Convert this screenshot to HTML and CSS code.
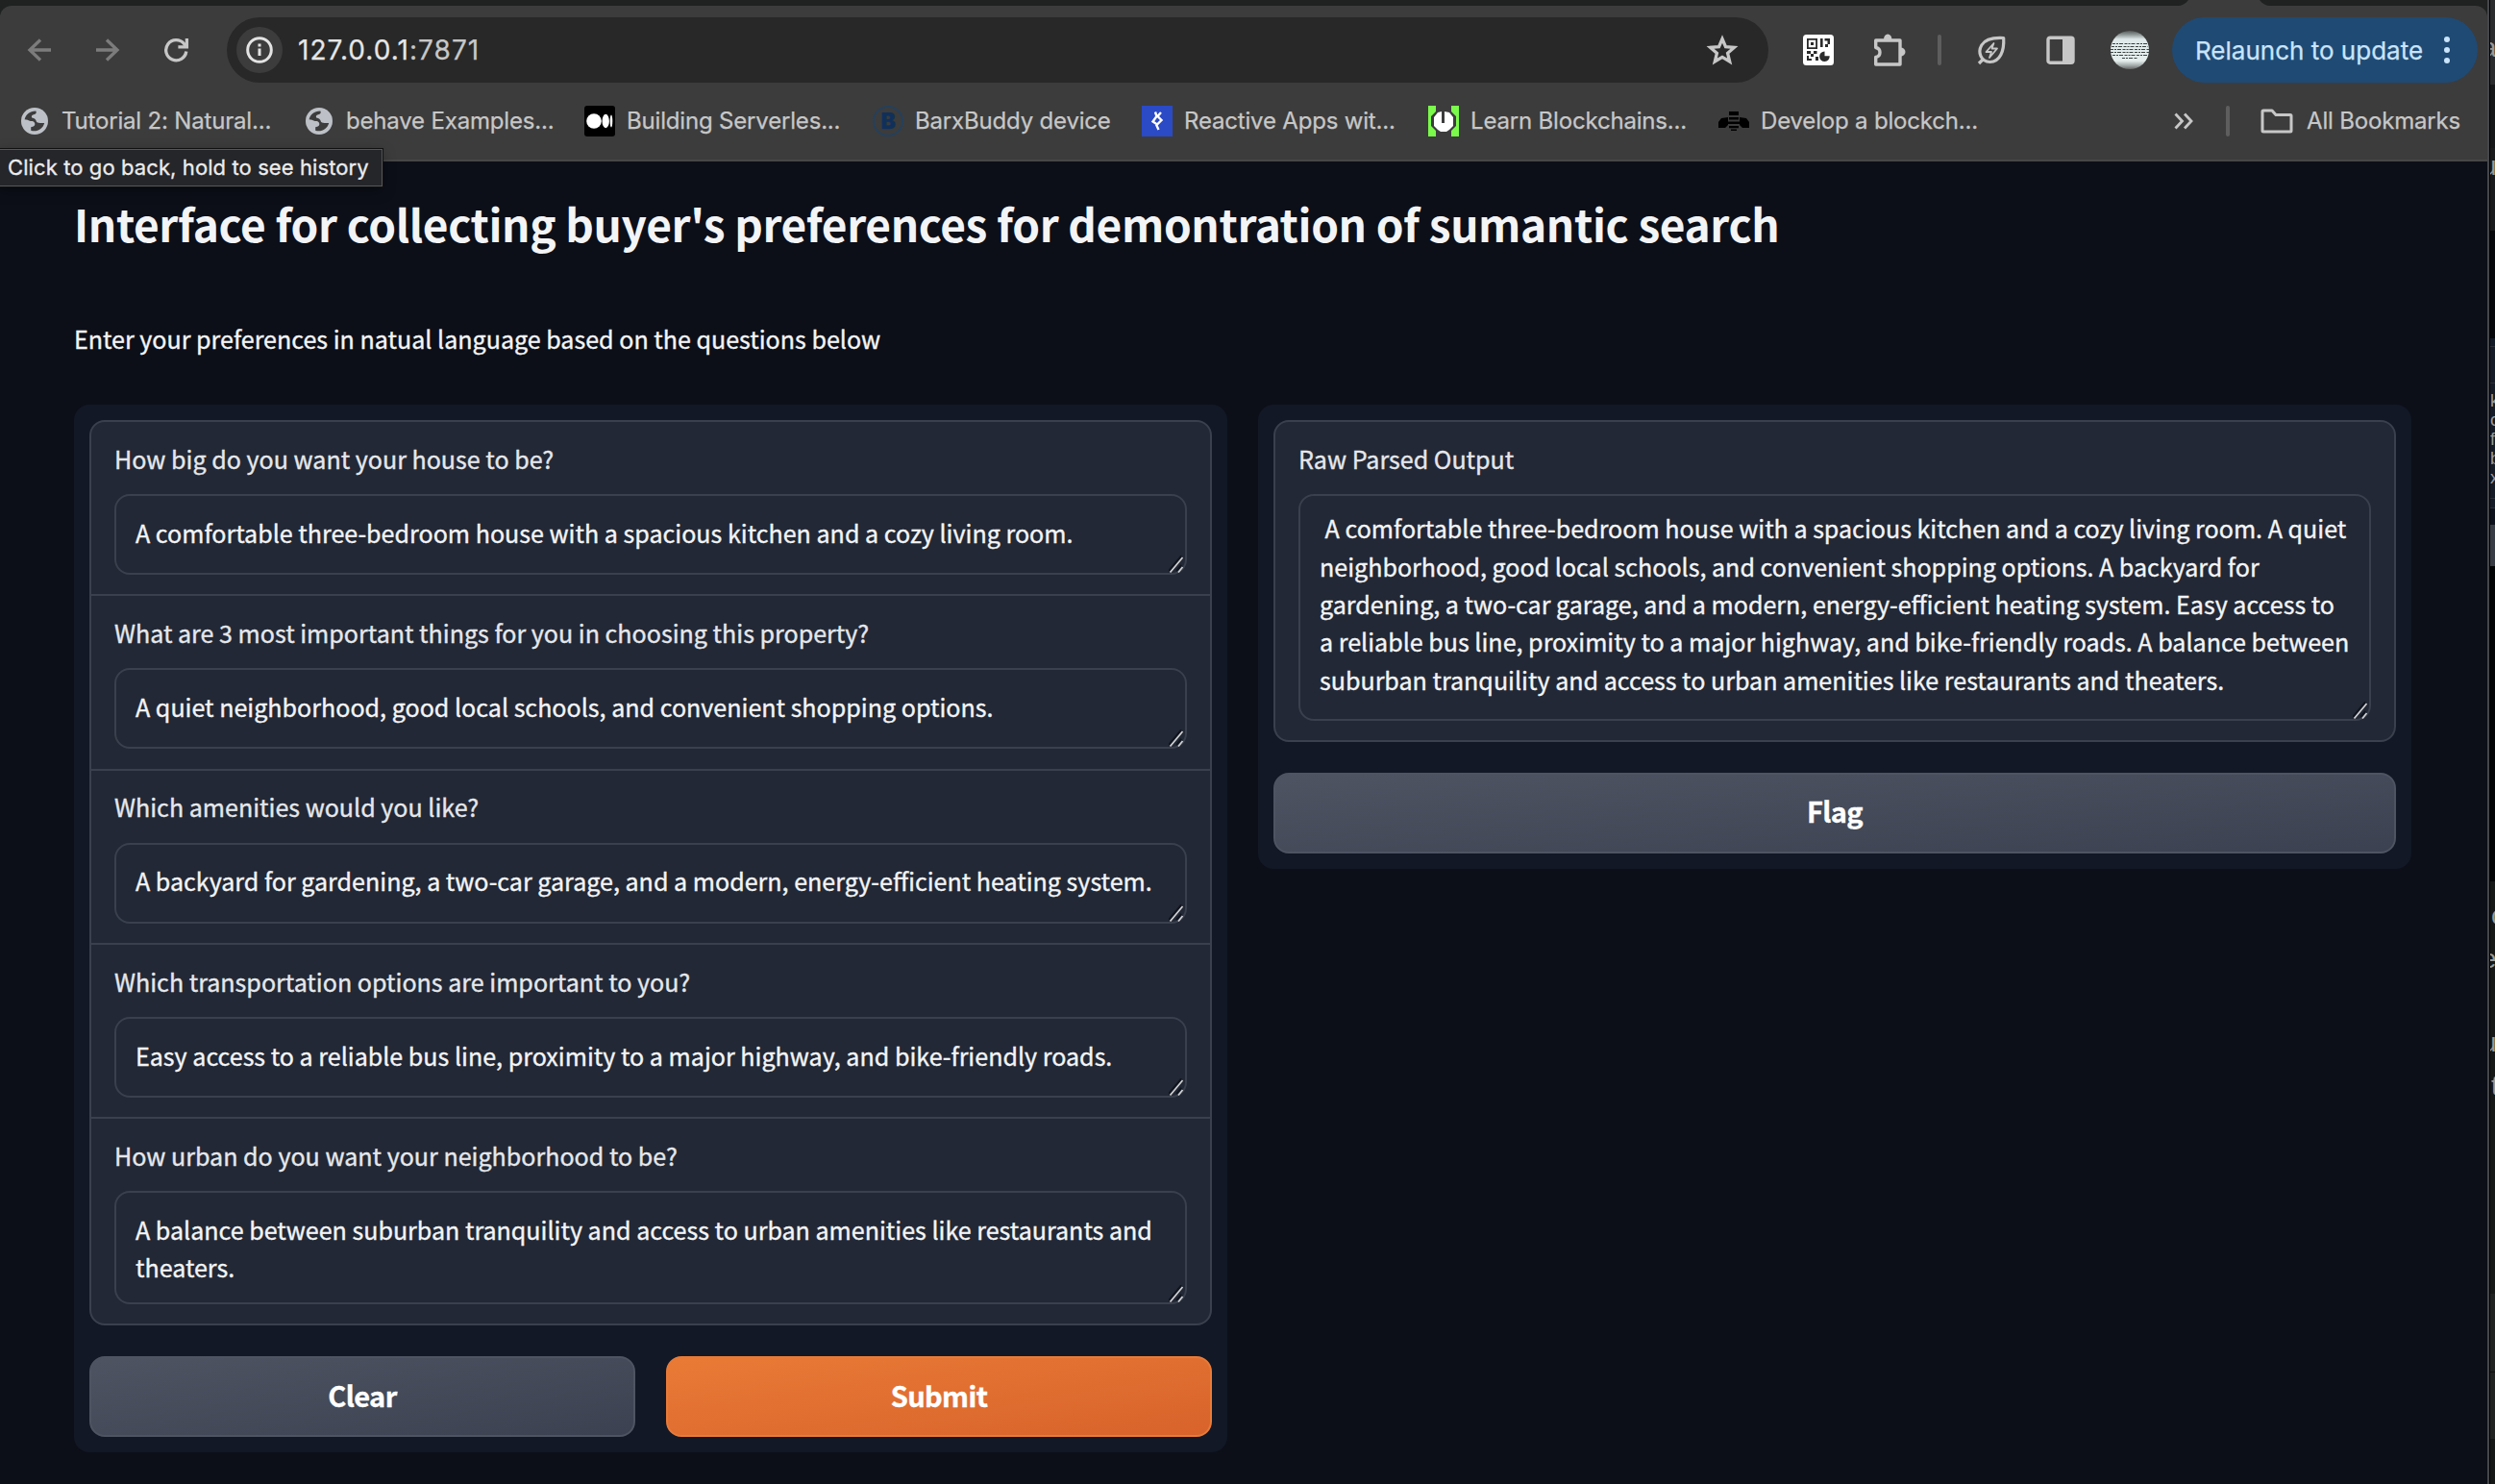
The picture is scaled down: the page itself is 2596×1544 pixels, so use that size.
FILE: index.html
```html
<!DOCTYPE html>
<html lang="en">
<head>
<meta charset="utf-8">
<title>127.0.0.1:7871</title>
<link rel="stylesheet" href="styles.css">
</head>
<body>
<svg class="defs" width="0" height="0">
  <symbol id="globe" viewBox="0 0 28 28">
    <circle cx="14" cy="14" r="14" fill="#bdc1c7"/>
    <path fill="#3c3c3c" d="M3.6 12.2C4.8 7 9.3 3.3 15.4 3.5c1 2-.2 3.4-2.4 3.8-2 .4-2.6 1.600-1.800 3.200 2.600.2 4.200 1.700 4.800 4.200 1.800 1.600 5 1.500 8.200 1.200-1.400 5.400-6.200 9-12.400 8.300l-1.600-.4v-3.600c3-.3 4.600-1.800 4-3.900-.6-1.900-2-2.300-4.400-2.200-2.200-1-3.900-1.800-6.200-1.900z"/>
  </symbol>
  <symbol id="grip" viewBox="0 0 16 18">
    <path d="M1 17 14 1.500M9 17l5-6" stroke="#10141d" stroke-width="2" transform="translate(-.8 -1.200)"/>
    <path d="M1.500 17.500 14.500 2M10 17.500l4.500-5.500" stroke="#d0d2d5" stroke-width="1.700"/>
  </symbol>
</svg>
<div class="desktop">
<div class="window">
  <div class="tabstrip">
    <svg class="tab" width="96" height="6" viewBox="0 0 96 6"><path fill="#3c3c3c" d="M0 6c4 0 8-2 11-6h74c3 4 7 6 11 6z"/></svg>
  </div>
  <header class="chrome">
    <div class="nav">
      <svg class="back" width="26" height="26" viewBox="0 0 26 26" fill="none" stroke="#7c7c7c" stroke-width="3.300"><path d="M25 13H3M14 2.500 3 13l11 10.500"/></svg>
      <svg class="forward" width="26" height="26" viewBox="0 0 26 26" fill="none" stroke="#7c7c7c" stroke-width="3.300"><path d="M1 13h22M12 2.500 23 13 12 23.500"/></svg>
      <svg class="reload" width="28" height="28" viewBox="0 0 28 28" fill="none" stroke="#c7c7c7" stroke-width="3.300"><path d="M23.800 15.500A10.600 10.600 0 1 1 21.500 7.500l2 2.600"/><path d="M24.400 2v8.800h-9"/></svg>
      <div class="omnibox">
        <span class="info"><svg width="28" height="28" viewBox="0 0 28 28" fill="none" stroke="#e3e3e3" stroke-width="3"><circle cx="14" cy="14" r="12.300"/><path d="M14 12.500v7.500M14 7.500v3"/></svg></span>
        <span class="url">127.0.0.1<span class="port">:7871</span></span>
        <svg class="star" width="34" height="34" viewBox="0 0 34 34" fill="none" stroke="#c7c7c7" stroke-width="3.300"><path d="m17 5.500 3.500 8.200 8.900.7-6.800 5.900 2.100 8.700-7.700-4.600L9.300 29l2.100-8.700-6.800-5.900 8.900-.7z"/></svg>
      </div>
      <svg class="qr" width="32" height="32" viewBox="0 0 32 32"><rect width="32" height="32" rx="3.500" fill="#fff"/><g fill="#2b2b2b"><path fill-rule="evenodd" d="M4 4h11v11H4zm1.800 1.800v7.400h7.400V5.800zM8 8h3v3H8z"/><path d="M18 4h2.600v9H18zM22.500 4H28v6h-2.500V6.500h-3zM23 10h3v3h-3zM4 17h4v3H4zM11 17h3.500v3H11zM8 20h3v3H8zM4 22h2v3h3v2H4zM13 23h3v4h-3z"/><path d="M22.500 17.500v4.800h5.200a5.300 5.300 0 1 1-5.200-4.800z"/></g></svg>
      <svg class="puzzle" width="36" height="36" viewBox="0 0 36 36"><path fill="none" stroke="#c7c7c7" stroke-width="3.400" stroke-linejoin="round" d="M3.700 8H29v25H3.700v-7.500c3.200-.6 4.300-2.600 4.300-5s-1.100-4.400-4.300-5z"/><path fill="#c7c7c7" d="M12 7a4.200 5.600 0 0 1 8.400 0zM29.500 15.500a5 4.600 0 0 1 0 9.200z"/></svg>
      <i class="rule"></i>
      <svg class="leaf" width="32" height="32" viewBox="0 0 32 32" fill="none" stroke="#c7c7c7" stroke-width="3.200" stroke-linejoin="round"><path d="M28.700 3.500C20 3 10 4 5.800 11 1.500 18.500 5 28 14.500 28.500 25 28.500 29.500 17 28.700 3.500zM3 30l5-5"/><path stroke-width="1.800" d="m18.500 9-8 9h5.500l-2 6 8-9.500h-5.500z"/></svg>
      <svg class="panel" width="30" height="30" viewBox="0 0 30 30"><rect x="2" y="2.200" width="26" height="26" rx="2" fill="none" stroke="#c7c7c7" stroke-width="3.400"/><path fill="#c7c7c7" d="M17 2h11v26H17z"/></svg>
      <svg class="avatar" width="40" height="40" viewBox="0 0 40 40"><defs><linearGradient id="av" x2="0" y2="1"><stop offset="0" stop-color="#555a5a"/><stop offset=".1" stop-color="#8e9696"/><stop offset=".22" stop-color="#dfe9e9"/><stop offset=".78" stop-color="#e6eeee"/><stop offset=".9" stop-color="#a3abab"/><stop offset="1" stop-color="#666"/></linearGradient></defs><circle cx="20" cy="20" r="20" fill="url(#av)"/><g stroke="#3c4343" stroke-width="1.200" stroke-dasharray="3 1 2 1 4 1.500"><path d="M2 13.500h36M1 16.500h38M0 19.500h40M0 22.500h40M2 25.500h36M12 28.500h16"/></g></svg>
      <div class="relaunch"><span>Relaunch to update</span><svg width="6" height="28" viewBox="0 0 6 28" fill="#c9e4fb"><circle cx="3" cy="3" r="3"/><circle cx="3" cy="14" r="3"/><circle cx="3" cy="25" r="3"/></svg></div>
    </div>
    <div class="bookmarks">
      <div class="bm bm1"><svg width="28" height="28"><use href="#globe"/></svg><span>Tutorial 2: Natural...</span></div>
      <div class="bm bm2"><svg width="28" height="28"><use href="#globe"/></svg><span>behave Examples...</span></div>
      <div class="bm bm3"><svg width="32" height="32" viewBox="0 0 32 32"><rect width="32" height="32" rx="3"/><g fill="#fff"><circle cx="10" cy="16" r="7.800"/><ellipse cx="22.200" cy="16" rx="3.700" ry="7.200"/><ellipse cx="28" cy="16" rx="1.300" ry="6.500"/></g></svg><span>Building Serverles...</span></div>
      <div class="bm bm4"><span class="barx">B</span><span>BarxBuddy device</span></div>
      <div class="bm bm5"><svg width="32" height="32" viewBox="0 0 32 32"><rect width="32" height="32" fill="#2b4ac6"/><path fill="none" stroke="#fff" stroke-width="2.400" d="m14 6.500 1.500 4.500-4 5.500 4.500 3 4.500-4.500-4-4 3.500-4M15 19.500l2.500 5.500"/></svg><span>Reactive Apps wit...</span></div>
      <div class="bm bm6"><svg width="32" height="32" viewBox="0 0 32 32"><path fill="#7bfa4c" d="M0 0h32v32H0z"/><path fill="#3c3c3c" d="M8 0h16v6l5 5v10l-5 5v6H8v-6l-5-5V11l5-5z"/><path fill="#fff" d="M10 7l4-1v12h3V6l5 1 4 5v9l-4 4-3 2h-6l-3-2-4-4v-9z"/></svg><span>Learn Blockchains...</span></div>
      <div class="bm bm7"><svg width="32" height="20" viewBox="0 0 32 20"><path d="M11 0h10v4H11zM3 7l7-1v8l-3 3H0v-6zM29 7l-7-1v8l3 3h7v-6zM11 6h10v2.500H11zM10 10.500h12V13H10zM11 15h10v2.200H11zM13 18.500h6V20h-6z"/></svg><span>Develop a blockch...</span></div>
      <svg class="more" width="20" height="18" viewBox="0 0 20 18" fill="none" stroke="#c7c7c7" stroke-width="2.800"><path d="m1.500 1.500 7 7.500-7 7.500M11 1.500 18 9l-7 7.500"/></svg>
      <i class="rule"></i>
      <svg class="folder" width="34" height="26" viewBox="0 0 34 26" fill="none" stroke="#c7c7c7" stroke-width="3" stroke-linejoin="round"><path d="M2 23V3q0-1 1-1h9l4 4.500h15q1 0 1 1V23q0 1-1 1H3q-1 0-1-1z"/></svg>
      <span class="all">All Bookmarks</span>
    </div>
  </header>
  <div class="tooltip">Click to go back, hold to see history</div>
  <main class="page">
    <h1>Interface for collecting buyer's preferences for demontration of sumantic search</h1>
    <p class="lead">Enter your preferences in natual language based on the questions below</p>
    <div class="columns">
      <section class="column">
        <div class="form">
          <div class="field"><label>How big do you want your house to be?</label><div class="box">A comfortable three-bedroom house with a spacious kitchen and a cozy living room.<svg class="grip"><use href="#grip"/></svg></div></div>
          <div class="field"><label>What are 3 most important things for you in choosing this property?</label><div class="box">A quiet neighborhood, good local schools, and convenient shopping options.<svg class="grip"><use href="#grip"/></svg></div></div>
          <div class="field"><label>Which amenities would you like?</label><div class="box">A backyard for gardening, a two-car garage, and a modern, energy-efficient heating system.<svg class="grip"><use href="#grip"/></svg></div></div>
          <div class="field"><label>Which transportation options are important to you?</label><div class="box">Easy access to a reliable bus line, proximity to a major highway, and bike-friendly roads.<svg class="grip"><use href="#grip"/></svg></div></div>
          <div class="field"><label>How urban do you want your neighborhood to be?</label><div class="box tall">A balance between suburban tranquility and access to urban amenities like restaurants and<br>theaters.<svg class="grip"><use href="#grip"/></svg></div></div>
        </div>
        <div class="buttons"><button>Clear</button><button class="primary">Submit</button></div>
      </section>
      <section class="column">
        <div class="form">
          <div class="field"><label>Raw Parsed Output</label><div class="box output">&nbsp;A comfortable three-bedroom house with a spacious kitchen and a cozy living room. A quiet<br>neighborhood, good local schools, and convenient shopping options. A backyard for<br>gardening, a two-car garage, and a modern, energy-efficient heating system. Easy access to<br>a reliable bus line, proximity to a major highway, and bike-friendly roads. A balance between<br>suburban tranquility and access to urban amenities like restaurants and theaters.<svg class="grip"><use href="#grip"/></svg></div></div>
        </div>
        <div class="buttons"><button>Flag</button></div>
      </section>
    </div>
  </main>
</div>
<aside class="behind">
  <div class="s1"><span>a</span></div>
  <div class="s2"></div>
  <div class="s3"><span>u</span></div>
  <div class="s4"></div>
  <div class="s5"></div>
  <div class="s6"></div>
  <div class="s7"><span>k</span><span>o</span><span>f</span><span>b</span><span>x</span></div>
  <div class="s8"></div>
  <div class="s9"></div>
  <div class="s10"></div>
  <div class="s11"><span class="in">c</span><span>e</span><span>u</span><span class="in">t</span></div>
  <div class="s12"></div>
  <div class="s13"></div>
  <div class="s14"></div>
</aside>
</div>
</body>
</html>
```
FILE: styles.css
```css
* { box-sizing: border-box; }
body { margin: 0; background: #000; overflow: hidden; }
svg { display: block; flex: none; }
.defs { position: absolute; }

.desktop { display: flex; width: 2596px; height: 1544px; }
.window {
  position: relative;
  width: 2590px;
  border-right: 2px solid #45464a;
  background: #1f2221;
  display: flex;
  flex-direction: column;
}

/* Browser chrome */
.tabstrip { height: 6px; display: flex; justify-content: flex-end; padding-right: 226px; }
.chrome {
  height: 162px;
  background: #3c3c3c;
  border-bottom: 2px solid #474747;
  border-radius: 12px 12px 0 0;
  font-family: Inter, sans-serif;
  color: #c7c7c7;
  -webkit-text-stroke: .25px;
}
.nav { height: 92px; display: flex; align-items: center; padding-left: 28px; }
.forward { margin-left: 45px; }
.reload { margin-left: 45px; margin-right: 1px; }
.omnibox {
  width: 1604px;
  height: 68px;
  margin-left: 37px;
  padding: 0 31px 0 10px;
  border-radius: 34px;
  background: #282828;
  display: flex;
  align-items: center;
}
.info {
  width: 48px;
  height: 48px;
  border-radius: 50%;
  background: #3c3c3c;
  display: flex;
  align-items: center;
  justify-content: center;
}
.url { margin-left: 16px; font-size: 28px; letter-spacing: 1.05px; color: #e6e6e6; }
.port { color: #c7c7c7; }
.star { margin-left: auto; }
.qr { margin-left: 36px; }
.puzzle { margin-left: 40px; }
.rule { width: 4px; height: 32px; border-radius: 2px; background: #5e5e5e; }
.nav .rule { margin-left: 32px; }
.leaf { margin-left: 36px; }
.panel { margin-left: 41px; }
.avatar { margin-left: 37px; }
.relaunch {
  width: 318px;
  height: 68px;
  margin-left: 24px;
  padding: 0 29px 0 24px;
  border-radius: 34px;
  background: #1f4a74;
  color: #c9e4fb;
  font-size: 26px;
  font-weight: 400;
  white-space: nowrap;
  display: flex;
  align-items: center;
  justify-content: space-between;
}
.bookmarks {
  height: 56px;
  padding-left: 22px;
  padding-bottom: 1px;
  display: flex;
  align-items: center;
  font-size: 24px;
  letter-spacing: -.18px;
  white-space: nowrap;
}
.bm { display: flex; align-items: center; gap: 12px; }
.bm1 { width: 296px; gap: 14px; }
.bm2 { width: 290px; gap: 14px; }
.bm3 { width: 300px; }
.bm4 { width: 280px; }
.bm5 { width: 298px; }
.bm6 { width: 302px; }
.bm7 { width: 474px; }
.barx {
  width: 32px;
  height: 32px;
  border: 2px solid #24405c;
  border-radius: 50%;
  color: #10305c;
  font: 900 23px/28px Inter, sans-serif;
  text-align: center;
}
.bookmarks .rule { margin-left: 34px; }
.folder { margin-left: 32px; }
.all { margin-left: 14px; }

.tooltip {
  position: absolute;
  left: -2px;
  top: 155px;
  width: 400px;
  height: 39px;
  padding-left: 9px;
  border: 1px solid #55565a;
  outline: 1px solid #111;
  background: #25262a;
  color: #ececec;
  box-shadow: 0 4px 14px rgba(0, 0, 0, .35);
  font: 22px/37px Inter, sans-serif;
  letter-spacing: .1px;
  white-space: nowrap;
  -webkit-text-stroke: .3px;
}

/* Form page */
.page {
  flex: 1;
  padding: 34px 79px 0 77px;
  background: #0c0f18;
  color: #f3f4f6;
  font: 25.07px/39.3px "Noto Sans CJK SC", sans-serif;
  white-space: nowrap;
  -webkit-text-stroke: .35px;
}
h1 { margin: 0 0 71.4px; font-size: 46px; line-height: 60px; font-weight: 700; letter-spacing: -.38px; -webkit-text-stroke: 0; }
.lead { margin: 0 0 48.300px; }
.columns { display: grid; grid-template-columns: 1200px 1200px; gap: 32px; align-items: start; }
.column {
  padding: 16px;
  border-radius: 16px;
  background: #121825;
  display: grid;
  gap: 32px;
}
.form { border: 2px solid #3a404d; border-radius: 16px; background: #222835; }
.field { padding: 18.600px 24px 20px; }
.field + .field { border-top: 2px solid #3a404d; }
.field:not(:last-child) { padding-bottom: 20.330px; }
label { display: block; height: 56.400px; color: #e5e7eb; }
.box {
  position: relative;
  height: 84px;
  padding: 18.800px 20px 0;
  border: 2px solid #3a404d;
  border-radius: 16px;
}
.box.tall { height: 118px; padding-top: 18.500px; }
.box.output { height: 236px; padding-top: 14.500px; }
.grip { position: absolute; right: 1px; bottom: 0; width: 16px; height: 18px; }
.buttons { display: flex; gap: 32px; }
button {
  flex: 1;
  height: 84px;
  padding: 0 0 4px;
  border: 2px solid #4e5462;
  border-radius: 16px;
  background: linear-gradient(to bottom right, #4e5462, #3b4150) border-box;
  color: #fff;
  font: 700 29px/1 "Noto Sans CJK SC", sans-serif;
  letter-spacing: -.6px;
}
button.primary {
  border-color: #e87b38;
  background: linear-gradient(to bottom right, #e97b36, #d8622b) border-box;
}

/* Sliver of the window behind */
.behind {
  width: 6px;
  border-left: 1px solid #000;
  overflow: hidden;
  color: #9a9a9a;
  font: 28px/36px "Liberation Sans", sans-serif;
}
.behind span { display: block; margin-left: -9px; }
.behind .in { margin-left: 1px; }
.s1 { height: 88px; padding-top: 32px; background: #2a2b2c; }
.s2 { height: 66px; background: #151617; }
.s3 { height: 86px; padding-top: 1px; background: #191a1b; }
.s4 { height: 112px; background: #05070b; }
.s5 { height: 8px; background: #131a27; }
.s6 { height: 39px; background: #151b27; border: solid #2a2f38; border-width: 1px 0; }
.s7 { height: 119px; padding-top: 8px; background: #151b27; font-size: 18px; line-height: 20px; }
.behind .s7 span { margin-left: 0; }
.s8 { height: 11px; background: #151b27; border: solid #2a2f38; border-width: 1px 0; }
.s9 { height: 17px; background: #0c111c; }
.s10 { height: 43px; background: #383c44; }
.s11 { height: 757px; padding-top: 341px; line-height: 45px; background: linear-gradient(#020305 328px, #161717 328px); }
.s11 span:nth-child(3) { padding-top: 42px; }
.s12 { height: 82px; background: #202121; border-bottom: 1px solid #0e0e0e; }
.s13 { height: 69px; background: #202121; }
.s14 { height: 47px; background: #151616; }
```
